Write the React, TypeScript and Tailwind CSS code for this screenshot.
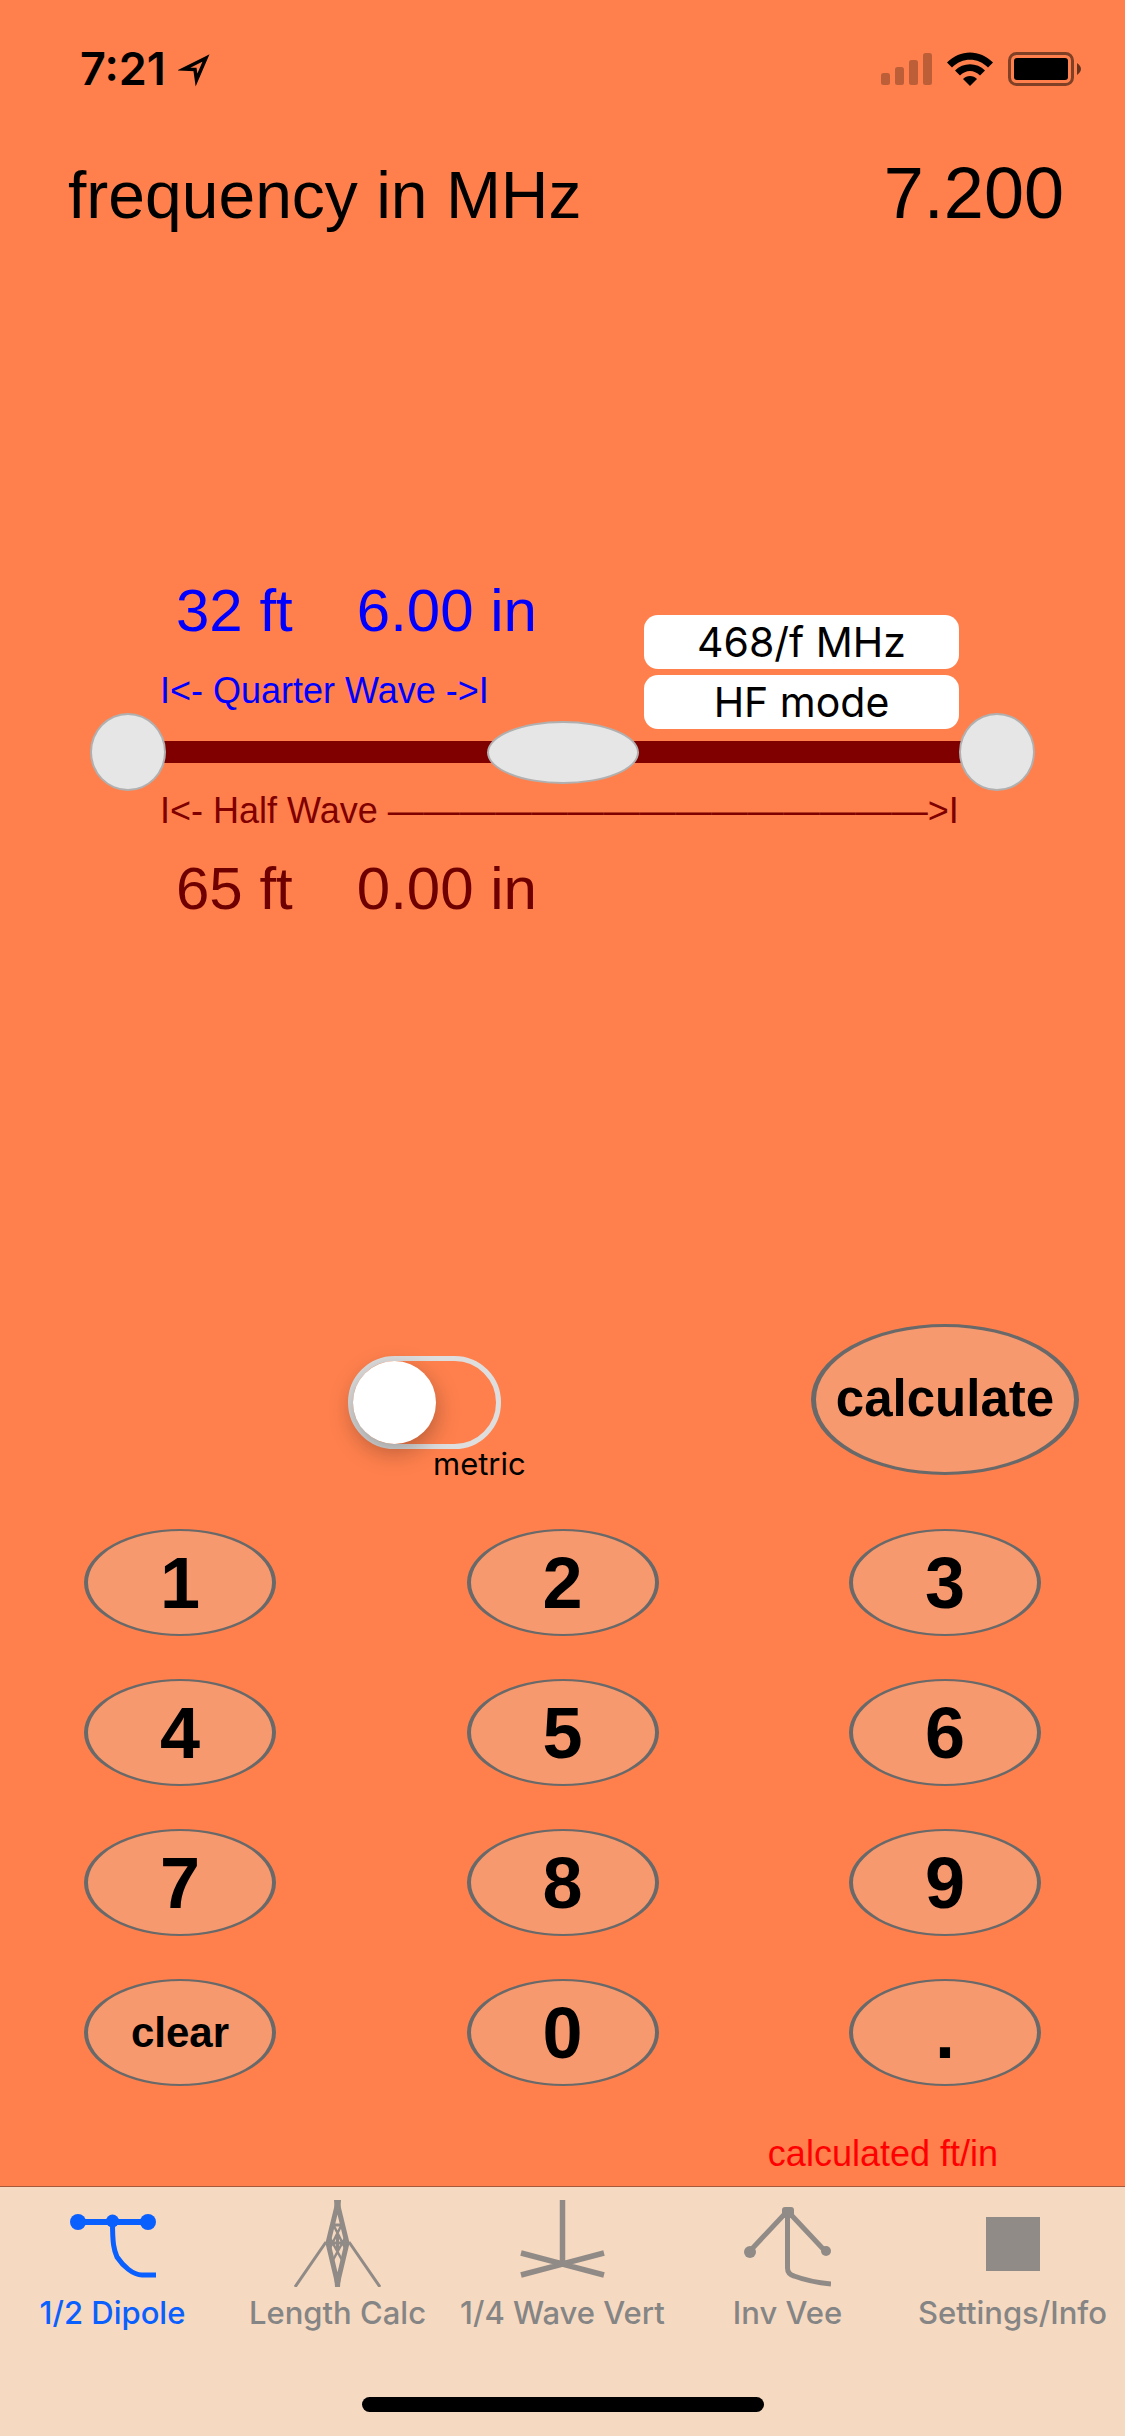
import { useState } from 'react';

const KEYS = ['1', '2', '3', '4', '5', '6', '7', '8', '9', 'clear', '0', '.'];

const MODES = [
  { factor: 468, formula: '468/f MHz', name: 'HF mode' },
  { factor: 480, formula: '480/f MHz', name: 'VHF mode' },
];

const TABS = [
  { id: 'dipole', name: '1/2 Dipole', icon: DipoleIcon },
  { id: 'length', name: 'Length Calc', icon: TowerIcon },
  { id: 'vertical', name: '1/4 Wave Vert', icon: VerticalIcon },
  { id: 'vee', name: 'Inv Vee', icon: VeeIcon },
  { id: 'settings', name: 'Settings/Info', icon: SettingsIcon },
];

function DipoleIcon() {
  return (
    <svg viewBox="0 0 87 87" className="size-[87px]" fill="none" stroke="currentColor" strokeWidth="5">
      <path d="M4 22H83" strokeWidth="6" />
      <path d="M43.5 22C43.5 44 45 50 48 57C54 66 64 75 73 75H87" />
      <g fill="currentColor" stroke="none">
        <circle cx="9" cy="22" r="8" />
        <circle cx="43.5" cy="21" r="6.5" />
        <circle cx="79" cy="22" r="8" />
      </g>
    </svg>
  );
}

function TowerIcon() {
  return (
    <svg viewBox="0 0 87 87" className="size-[87px]" fill="none" stroke="currentColor" strokeWidth="3">
      <path d="M43.5 4L34 43L43.5 83L53 43Z" strokeWidth="5" />
      <path d="M32 42L1 87M55 42L86 87M32 43H55M38 25H49M43.5 35V50" />
      <path d="M40 26L52 50M47 26L35 50M36 38L48 60M51 38L39 60" strokeWidth="2.500" />
      <path d="M40 0H47L46 14H41ZM40 73H47L46 87H41Z" fill="currentColor" stroke="none" />
    </svg>
  );
}

function VerticalIcon() {
  return (
    <svg viewBox="0 0 87 87" className="size-[87px]" fill="none" stroke="currentColor" strokeWidth="5.500">
      <path d="M43.500 0V65M2 53L43.500 64L85 53M2 75L43.500 64L85 75" />
    </svg>
  );
}

function VeeIcon() {
  return (
    <svg viewBox="0 0 87 87" className="size-[87px]" fill="none" stroke="currentColor" strokeWidth="5">
      <path d="M5 52L43.5 11L82 52M43.5 11V68Q43.5 74 50 76Q66 82 87 84" />
      <g fill="currentColor" stroke="none">
        <rect x="38" y="7" width="12" height="11" rx="3" />
        <circle cx="6" cy="52" r="6" />
        <circle cx="82" cy="51" r="5" />
      </g>
    </svg>
  );
}

function SettingsIcon() {
  return (
    <svg viewBox="0 0 87 87" className="size-[87px]" fill="currentColor">
      <rect x="17" y="17" width="54" height="54" />
    </svg>
  );
}

function StatusBar() {
  return (
    <div className="flex h-[138px] items-center justify-between pr-11 pl-20">
      <div className="flex items-center gap-3">
        <span className="font-['Inter',sans-serif] text-[45px] leading-[48px] font-semibold">7:21</span>
        <svg viewBox="0 0 32 34" className="mt-1 h-[34px] w-8" fill="none" stroke="currentColor" strokeWidth="3.500">
          <path d="M28 4L6 15L17 15.500L18.500 26Z" strokeMiterlimit="10" />
        </svg>
      </div>
      <div className="flex items-center gap-[15px]">
        <svg viewBox="0 0 51 34" className="h-[34px] w-[51px]" fill="currentColor" opacity="0.26">
          <rect x="0" y="21" width="9" height="12" rx="2.500" />
          <rect x="14" y="15" width="9" height="18" rx="2.500" />
          <rect x="28" y="8" width="9" height="25" rx="2.500" />
          <rect x="42" y="1" width="9" height="32" rx="2.500" />
        </svg>
        <svg viewBox="0 0 46 34" className="h-[34px] w-[46px]" fill="currentColor">
          <path d="M0 10.500C13-3 33-3 46 10.500L41 15.500C31 5 15 5 5 15.500Z" />
          <path d="M8 18.500C16 10 30 10 38 18.500L33 23.500C27 17.500 19 17.500 13 23.500Z" />
          <path d="M16 27C19.500 23 26.500 23 30 27L23 34Z" />
        </svg>
        <svg viewBox="0 0 73 34" className="h-[34px] w-[73px]">
          <rect x="1.500" y="1.500" width="63" height="31" rx="7" fill="none" stroke="currentColor" strokeWidth="3" opacity="0.5" />
          <rect x="6" y="6" width="54" height="22" rx="3" fill="currentColor" />
          <path d="M69 11Q73 14 73 17Q73 20 69 23Z" fill="currentColor" opacity="0.6" />
        </svg>
      </div>
    </div>
  );
}

function Reading({ length, color }: { length: number; color: string }) {
  const feet = Math.floor(length);
  const inches = (length - feet) * 12;

  return (
    <div className={`flex gap-16 pl-4 text-[60px] leading-[72px] ${color}`}>
      <span>{feet} ft</span>
      <span>{inches.toFixed(2)} in</span>
    </div>
  );
}

export default function App() {
  const [entry, setEntry] = useState('7.200');
  const [halfWave, setHalfWave] = useState(65);
  const [mode, setMode] = useState(0);
  const [metric, setMetric] = useState(false);
  const [activeTab, setActiveTab] = useState('dipole');

  const pressKey = (key: string) => {
    if (key === 'clear') {
      setEntry('');
      return;
    }
    setEntry(entry + key);
  };

  const calculate = () => {
    const frequency = parseFloat(entry);
    if (frequency > 0) {
      setHalfWave(MODES[mode].factor / frequency);
    }
  };

  const toggleMode = () => setMode((mode + 1) % MODES.length);

  return (
    <div className="flex min-h-screen flex-col bg-[#ff804d] font-['Liberation_Sans',Arial,sans-serif] text-black">
      <StatusBar />

      <main className="flex flex-1 flex-col">
        <div className="mt-[15px] flex items-baseline justify-between pr-[61px] pl-[68px]">
          <h1 className="text-[66px] leading-[80px]">frequency in MHz</h1>
          <output className="text-[72px] leading-[80px]">{entry}</output>
        </div>

        <section className="mt-[340px]">
          <div className="flex items-end justify-between pr-[166px] pl-40">
            <div>
              <Reading length={halfWave / 2} color="text-[#0000ff]" />
              <p className="mt-6 mb-0.5 text-4xl leading-[40px] text-[#0000ff]">I&lt;- Quarter Wave -&gt;I</p>
            </div>
            <div className="-mb-4 flex w-[315px] flex-col gap-1.5 font-['Inter',sans-serif]">
              <button onClick={toggleMode} className="h-[54px] rounded-[14px] bg-white text-[41px] leading-[54px]">
                {MODES[mode].formula}
              </button>
              <button onClick={toggleMode} className="h-[54px] rounded-[14px] bg-white text-[41px] leading-[54px]">
                {MODES[mode].name}
              </button>
            </div>
          </div>

          {/* Antenna wire with its centre and end insulators */}
          <div className="flex items-center px-[90px]">
            <div className="z-10 h-[78px] w-[76px] rounded-[50%] border-2 border-[#b0b0b0] bg-[#e6e6e6]" />
            <div className="-mx-2 h-[22px] flex-1 bg-[#800000]" />
            <div className="z-10 h-[63px] w-[152px] rounded-[50%] border-2 border-[#b0b0b0] bg-[#e6e6e6]" />
            <div className="-mx-2 h-[22px] flex-1 bg-[#800000]" />
            <div className="z-10 h-[78px] w-[76px] rounded-[50%] border-2 border-[#b0b0b0] bg-[#e6e6e6]" />
          </div>

          <div className="pl-40">
            <p className="text-4xl leading-[40px] whitespace-nowrap text-[#800000]">
              I&lt;- Half Wave ———————————————&gt;I
            </p>
            <div className="mt-[22px]">
              <Reading length={halfWave} color="text-[#6e0000]" />
            </div>
          </div>
        </section>

        <section className="mt-auto">
          <div className="flex items-start justify-between pr-[46px] pl-[348px]">
            <div className="mt-8 flex flex-col">
              <input
                id="metric"
                type="checkbox"
                role="switch"
                checked={metric}
                onChange={(e) => setMetric(e.target.checked)}
                className="h-[93px] w-[153px] appearance-none rounded-full border-5 border-[#dedede] before:block before:size-[83px] before:rounded-full before:bg-white before:shadow-[0_8px_24px_rgba(0,0,0,0.3)] checked:bg-green-500 checked:before:ml-[60px]"
              />
              <label htmlFor="metric" className="pl-[85px] font-['Inter',sans-serif] text-[31px] leading-[30px]">
                metric
              </label>
            </div>
            <button
              onClick={calculate}
              className="h-[151px] w-[268px] rounded-[50%] border-x-5 border-y-3 border-[#696969] bg-[#f6996f] text-[51px] font-bold"
            >
              calculate
            </button>
          </div>

          <div className="mt-[50px] grid grid-cols-[repeat(3,192px)] justify-between gap-y-[43px] px-[84px]">
            {KEYS.map((key) => (
              <button
                key={key}
                onClick={() => pressKey(key)}
                className={`h-[107px] rounded-[50%] border-x-4 border-y-2 border-[#696969] bg-[#f6996f] leading-[80px] font-bold ${
                  key === 'clear' ? 'text-[42px]' : 'text-7xl'
                }`}
              >
                {key}
              </button>
            ))}
          </div>

          <p className="mt-12 mb-3 pr-[127px] text-right text-4xl leading-[40px] text-[#ff0000]">
            {metric ? 'calculated meters' : 'calculated ft/in'}
          </p>
        </section>
      </main>

      <nav className="border-t border-[#a8583a] bg-[#f6d9c1] pt-[13px] pb-6 font-['Inter',sans-serif]">
        <div className="grid grid-cols-5">
          {TABS.map((tab) => (
            <button
              key={tab.id}
              onClick={() => setActiveTab(tab.id)}
              className={`flex flex-col items-center gap-2 ${activeTab === tab.id ? 'text-[#0a60ff]' : 'text-[#918b87]'}`}
            >
              <tab.icon />
              <span
                className={`text-[31px] leading-[36px] font-medium whitespace-nowrap ${
                  activeTab === tab.id ? 'text-[#0a60ff]' : 'text-[#858585]'
                }`}
              >
                {tab.name}
              </span>
            </button>
          ))}
        </div>
        <div className="mx-auto mt-[66px] h-[15px] w-[402px] rounded-full bg-black" />
      </nav>
    </div>
  );
}
